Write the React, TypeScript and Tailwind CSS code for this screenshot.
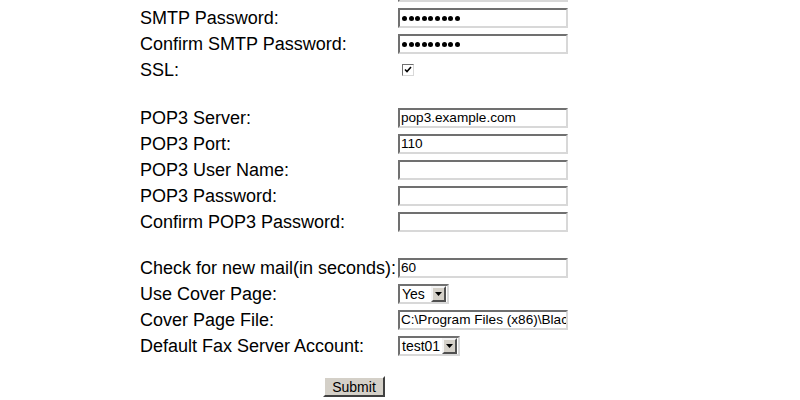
const FONT = "font-['Liberation_Sans',Arial,sans-serif]";

function TextBox({ value = "", dots = 0 }: { value?: string; dots?: number }) {
  return (
    <div className="flex h-[20px] w-[170px] items-center overflow-hidden whitespace-nowrap border-2 border-t-[#707070] border-l-[#707070] border-r-[#d8d8d8] border-b-[#d8d8d8] bg-white pl-[1px] text-[13.6px] leading-none text-black">
      {dots > 0 ? (
        <span className="flex gap-[1.6px] pl-[1px]">
          {Array.from({ length: dots }).map((_, i) => (
            <span key={i} className="h-[5px] w-[5px] rounded-full bg-black" />
          ))}
        </span>
      ) : (
        value
      )}
    </div>
  );
}

function Select({ value, width }: { value: string; width: string }) {
  return (
    <div className={`flex h-[20px] ${width} items-center border-2 border-t-[#707070] border-l-[#707070] border-r-[#d8d8d8] border-b-[#d8d8d8] bg-white`}>
      <span className="flex-1 pl-[2px] text-[14px] leading-none text-black">{value}</span>
      <span className="mr-[1px] flex h-[16px] w-[15px] items-center justify-center border-2 border-t-[#f4f4f4] border-l-[#f4f4f4] border-r-[#505050] border-b-[#505050] bg-[#d4d0c8]">
        <svg width="7" height="4" viewBox="0 0 7 4">
          <path d="M0 0h7L3.5 4z" fill="#000" />
        </svg>
      </span>
    </div>
  );
}

function Checkbox() {
  return (
    <div className="ml-[4px] flex h-[12px] w-[12px] items-center justify-center border border-t-[#707070] border-l-[#707070] border-r-[#d8d8d8] border-b-[#d8d8d8] bg-white">
      <svg width="8" height="8" viewBox="0 0 8 8">
        <path d="M1 3.5l2 2 4-4.5" stroke="#000" strokeWidth="1.6" fill="none" />
      </svg>
    </div>
  );
}

type Row = { label: string; field: React.ReactNode } | { gap: string };

const ROWS: Row[] = [
  { label: "", field: <TextBox /> },
  { label: "SMTP Password:", field: <TextBox dots={9} /> },
  { label: "Confirm SMTP Password:", field: <TextBox dots={9} /> },
  { label: "SSL:", field: <Checkbox /> },
  { gap: "h-[22px]" },
  { label: "POP3 Server:", field: <TextBox value="pop3.example.com" /> },
  { label: "POP3 Port:", field: <TextBox value="110" /> },
  { label: "POP3 User Name:", field: <TextBox /> },
  { label: "POP3 Password:", field: <TextBox /> },
  { label: "Confirm POP3 Password:", field: <TextBox /> },
  { gap: "h-[20px]" },
  { label: "Check for new mail(in seconds):", field: <TextBox value="60" /> },
  { label: "Use Cover Page:", field: <Select value="Yes" width="w-[51px]" /> },
  { label: "Cover Page File:", field: <TextBox value="C:\Program Files (x86)\Black" /> },
  { label: "Default Fax Server Account:", field: <Select value="test01" width="w-[62px]" /> },
];

export default function App() {
  return (
    <div className={`h-[400px] w-[800px] overflow-hidden bg-white ${FONT}`}>
      <div className="ml-[140px] mt-[-21px] w-[428px]">
        {ROWS.map((row, i) =>
          "gap" in row ? (
            <div key={i} className={row.gap} />
          ) : (
            <div key={i} className="flex h-[26px] items-center">
              <div className="w-[258px] whitespace-nowrap text-[18px] leading-[20px] text-black">{row.label}</div>
              {row.field}
            </div>
          )
        )}
        <div className="flex justify-center pt-[17px]">
          <button className="h-[21px] w-[62px] border-2 border-t-white border-l-white border-r-[#404040] border-b-[#404040] bg-[#d4d0c8] text-[14px] leading-none text-black">
            Submit
          </button>
        </div>
      </div>
    </div>
  );
}
